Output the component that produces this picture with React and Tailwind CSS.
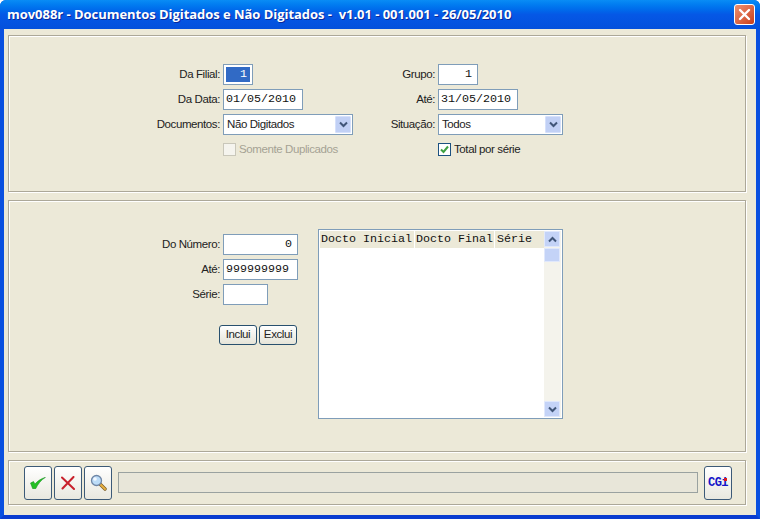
const sans = "font-['Liberation_Sans',Arial,sans-serif]";
const mono = "font-['Liberation_Mono','Courier_New',monospace]";

function Chevron({ up = false }) {
  return (
    <svg width="9" height="7" viewBox="0 0 9 7" className={up ? "rotate-180" : ""}>
      <path d="M1 1.5 L4.5 5 L8 1.5" fill="none" stroke="#415679" strokeWidth="2" />
    </svg>
  );
}

function Label({ children }) {
  return <div className="flex h-[21px] items-center justify-end text-[11.5px] tracking-[-0.4px] text-[#222]">{children}</div>;
}

function Field({ value, width, right = false }) {
  return (
    <div
      className={`flex h-[21px] items-center border border-[#7f9db9] bg-white px-[2px] text-[11.67px] text-[#111] ${mono} ${width} ${right ? "justify-end pr-[5px]" : ""}`}
    >
      {value}
    </div>
  );
}

function Combo({ value, width }) {
  return (
    <div className={`flex h-[21px] items-center justify-between border border-[#7f9db9] bg-white pl-[3px] pr-[1px] text-[11.5px] tracking-[-0.4px] text-[#222] ${width}`}>
      <span>{value}</span>
      <span className="flex h-[17px] w-[16px] items-center justify-center rounded-[1px] border border-[#d5e0fb] bg-[#c1d0f5]">
        <Chevron />
      </span>
    </div>
  );
}

function ScrollArrow({ up = false }) {
  return (
    <div className="flex h-[16px] w-[16px] items-center justify-center rounded-[1px] border border-[#e0e8fc] bg-[#c4d3f7]">
      <Chevron up={up} />
    </div>
  );
}

function SmallButton({ children }) {
  return (
    <button className="flex h-[20px] w-[38px] items-center justify-center rounded-[3px] border border-[#28506e] bg-gradient-to-b from-white to-[#e6e4d8] text-[11.5px] tracking-[-0.4px] text-[#222]">
      {children}
    </button>
  );
}

function ToolButton({ children, className = "" }) {
  return (
    <button className={`relative flex h-[34px] w-[28px] shrink-0 items-center justify-center rounded-[3px] border border-[#3c5a78] bg-gradient-to-b from-white to-[#e9e8df] ${className}`}>
      {children}
    </button>
  );
}

function Panel({ className = "", children }) {
  return (
    <section className={`border border-[#aca899] shadow-[inset_1px_1px_0_#fff,1px_1px_0_#fff] ${className}`}>
      {children}
    </section>
  );
}

export default function App() {
  return (
    <div className={`flex h-[519px] w-[760px] flex-col overflow-hidden rounded-t-[6px] bg-[#0a50e0] ${sans}`}>
      {/* Title bar */}
      <header className="flex h-[29px] shrink-0 items-center justify-between bg-gradient-to-b from-[#0a8cf5] via-[#0558e6] to-[#0450dc] pl-[7px] pr-[5px]">
        <h1 className="whitespace-pre text-[13px] font-bold tracking-[-0.04px] text-white [text-shadow:1px_1px_0_#0a2a9a] font-['Open_Sans',sans-serif]">
          mov088r - Documentos Digitados e Não Digitados -  v1.01 - 001.001 - 26/05/2010
        </h1>
        <button className="flex h-[21px] w-[21px] items-center justify-center rounded-[3px] border border-white bg-gradient-to-br from-[#ee9070] to-[#c83c14]">
          <svg width="13" height="13" viewBox="0 0 13 13">
            <path d="M2 2 L11 11 M11 2 L2 11" stroke="#fff" strokeWidth="2.4" strokeLinecap="round" />
          </svg>
        </button>
      </header>

      {/* Client area */}
      <main className="flex flex-1 flex-col gap-[8px] border-x-4 border-b-4 border-x-[#0a50e0] border-b-[#0a3cd0] bg-[#ece9d8] pb-[9px] pl-[4px] pr-[10px] pt-[6px]">
        {/* Selection filters */}
        <Panel className="h-[157px] pt-[28px]">
          <div className="grid grid-cols-[211px_130px_79px_125px] gap-x-[3px] gap-y-[4px]">
            <Label>Da Filial:</Label>
            <div className="flex h-[21px] w-[30px] items-center border border-[#7f9db9] bg-white p-[2px]">
              <span className={`flex h-[15px] w-full items-center justify-end bg-[#316ac5] pr-[3px] text-[11.67px] text-white ${mono}`}>1</span>
            </div>
            <Label>Grupo:</Label>
            <Field value="1" width="w-[40px]" right />

            <Label>Da Data:</Label>
            <Field value="01/05/2010" width="w-[80px]" />
            <Label>Até:</Label>
            <Field value="31/05/2010" width="w-[80px]" />

            <Label>Documentos:</Label>
            <Combo value="Não Digitados" width="w-[130px]" />
            <Label>Situação:</Label>
            <Combo value="Todos" width="w-[125px]" />

            <div />
            <label className="flex h-[21px] items-center gap-[3px] text-[11.5px] tracking-[-0.4px] text-[#a5a294]">
              <span className="h-[13px] w-[13px] border border-[#c9c7ba] bg-[#f5f4ee]" />
              Somente Duplicados
            </label>
            <div />
            <label className="flex h-[21px] items-center gap-[3px] text-[11.5px] tracking-[-0.4px] text-[#222]">
              <span className="flex h-[13px] w-[13px] items-center justify-center border border-[#1c5180] bg-white">
                <svg width="9" height="9" viewBox="0 0 9 9">
                  <path d="M1 4.5 L3.5 7 L8 1.5" fill="none" stroke="#3fa142" strokeWidth="2" />
                </svg>
              </span>
              Total por série
            </label>
          </div>
        </Panel>

        {/* Document ranges */}
        <Panel className="flex h-[252px] items-start pt-[28px]">
          <div className="mt-[5px] w-[289px]">
            <div className="grid grid-cols-[211px_75px] gap-x-[3px] gap-y-[4px]">
              <Label>Do Número:</Label>
              <Field value="0" width="w-[75px]" right />
              <Label>Até:</Label>
              <Field value="999999999" width="w-[75px]" />
              <Label>Série:</Label>
              <Field value="" width="w-[45px]" />
            </div>
            <div className="ml-[210px] mt-[20px] flex gap-[2px]">
              <SmallButton>Inclui</SmallButton>
              <SmallButton>Exclui</SmallButton>
            </div>
          </div>
          <div className="ml-[20px] flex h-[190px] w-[245px] border border-[#7f9db9] bg-white p-[1px]">
            <div className="flex-1">
              <div className={`flex h-[17px] items-center bg-[#ece9d8] text-[11.67px] text-[#111] ${mono}`}>
                <span className="w-[95px] border-r border-[#fff] pl-[1px]">Docto Inicial</span>
                <span className="w-[80px] border-r border-[#fff] pl-[1px]">Docto Final</span>
                <span className="pl-[2px]">Série</span>
              </div>
            </div>
            <div className="flex w-[17px] flex-col bg-[#f4f3ec]">
              <ScrollArrow up />
              <div className="mt-[1px] h-[14px] w-[16px] rounded-[1px] border border-[#e0e8fc] bg-[#c4d3f7]" />
              <div className="flex-1" />
              <ScrollArrow />
            </div>
          </div>
        </Panel>

        {/* Action toolbar */}
        <Panel className="flex h-[45px] items-center pl-[15px] pr-[12px]">
          <div className="flex items-center gap-[2px]">
            <ToolButton>
              <svg width="16" height="12" viewBox="0 0 16 12">
                <path d="M0.5 6 L3.5 4.5 L5 7 C7 4.5 11 1.5 15.5 0.3 C11 3 8 7 5.7 11.7 L2.7 11.7 Z" fill="#24c024" stroke="#128a1c" strokeWidth="0.5" />
              </svg>
            </ToolButton>
            <ToolButton>
              <svg width="14" height="14" viewBox="0 0 14 14">
                <path d="M1 1.5 L13 13 M12.5 1 L1.5 12.5" stroke="#c8202c" strokeWidth="2" strokeLinecap="round" />
              </svg>
            </ToolButton>
            <ToolButton>
              <svg width="17" height="17" viewBox="0 0 17 17">
                <path d="M9.5 9.5 L15 15" stroke="#7a5a20" strokeWidth="3.4" strokeLinecap="round" />
                <path d="M9.5 9.5 L15 15" stroke="#e8b040" strokeWidth="2" strokeLinecap="round" />
                <circle cx="6.5" cy="6.5" r="5" fill="#bcdcf8" stroke="#6f86a6" strokeWidth="1.3" />
                <circle cx="5" cy="5" r="1.8" fill="#f2f8ff" />
              </svg>
            </ToolButton>
          </div>
          <div className="ml-[6px] h-[21px] w-[580px] border border-[#9aa2a0] bg-[#e8e6d9]" />
          <ToolButton className="ml-[6px]">
            <span className={`text-[12px] font-bold tracking-[-0.6px] text-[#1414c8] ${mono}`}>CGi</span>
            <span className="absolute left-[19px] top-[11px] h-[3px] w-[3px] bg-[#e01818]" />
          </ToolButton>
        </Panel>
      </main>
    </div>
  );
}
